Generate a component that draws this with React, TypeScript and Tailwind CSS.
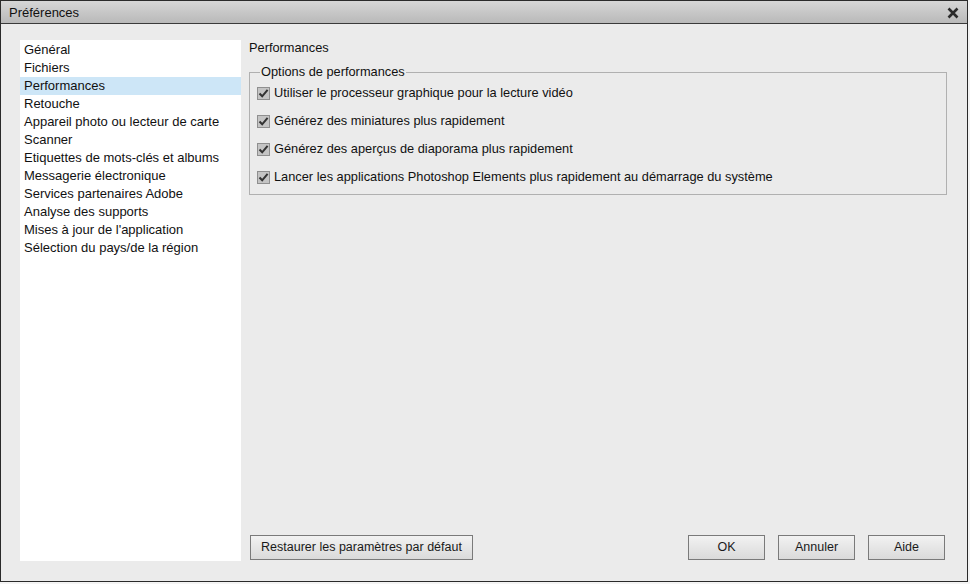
import React from 'react'

const categories = [
  'Général',
  'Fichiers',
  'Performances',
  'Retouche',
  'Appareil photo ou lecteur de carte',
  'Scanner',
  'Etiquettes de mots-clés et albums',
  'Messagerie électronique',
  'Services partenaires Adobe',
  'Analyse des supports',
  "Mises à jour de l'application",
  'Sélection du pays/de la région',
]

const options = [
  'Utiliser le processeur graphique pour la lecture vidéo',
  'Générez des miniatures plus rapidement',
  'Générez des aperçus de diaporama plus rapidement',
  'Lancer les applications Photoshop Elements plus rapidement au démarrage du système',
]

function Checkbox() {
  return (
    <span className="flex h-[13px] w-[13px] items-center justify-center border border-[#8f8f8f] bg-[#c4c4c4]">
      <svg width="11" height="11" viewBox="0 0 11 11">
        <path d="M1.5 5.5 L4.2 8.3 L9.6 1.8" fill="none" stroke="#333" strokeWidth="2" />
      </svg>
    </span>
  )
}

function Btn({ label, className }: { label: string; className: string }) {
  return (
    <button className={`h-[25px] border border-[#7a7a7a] bg-gradient-to-b from-[#f2f2f2] to-[#dadada] text-[12.5px] text-[#1a1a1a] ${className}`}>
      {label}
    </button>
  )
}

export default function App() {
  return (
    <div className="h-[584px] w-[970px] bg-[#f4f4f4] font-['Liberation_Sans',sans-serif]">
      <div className="flex h-[582px] w-[968px] flex-col border border-[#2a2a2a] bg-[#ebebeb]">
        <div className="flex h-[23px] items-center justify-between border-b border-[#3a3a3a] bg-gradient-to-b from-[#d6d6d6] to-[#b9b9b9] pl-[8px] pr-[8px] pt-[2px]">
          <span className="text-[13px] text-[#111]">Préférences</span>
          <svg width="12" height="12" viewBox="0 0 12 12">
            <path d="M1.5 1.5 L10.5 10.5 M10.5 1.5 L1.5 10.5" stroke="#2b2b2b" strokeWidth="2.6" />
          </svg>
        </div>
        <div className="flex flex-1 gap-[8px] pb-[20px] pl-[19px] pr-[20px] pt-[16px]">
          <ul className="w-[221px] bg-white pt-[1px] text-[13px] text-[#111]">
            {categories.map((c) => (
              <li
                key={c}
                className={`flex h-[18px] items-center pl-[4px] ${c === 'Performances' ? 'bg-[#cde6f7]' : ''}`}
              >
                {c}
              </li>
            ))}
          </ul>
          <div className="flex flex-1 flex-col text-[12.8px] text-[#111]">
            <div className="leading-[15px]">Performances</div>
            <fieldset className="mt-[10px] border border-[#b0b0b0] pb-[3px] pl-[7px]">
              <legend className="ml-[3px] px-[1px] leading-[14px]">Options de performances</legend>
              <div className="flex flex-col">
                {options.map((o) => (
                  <div key={o} className="flex h-[28px] items-center gap-[4px]">
                    <Checkbox />
                    <span>{o}</span>
                  </div>
                ))}
              </div>
            </fieldset>
            <div className="mb-[1px] ml-[1px] mr-[2px] mt-auto flex items-center">
              <Btn label="Restaurer les paramètres par défaut" className="w-[223px]" />
              <Btn label="OK" className="ml-auto w-[77px]" />
              <Btn label="Annuler" className="ml-[13px] w-[77px]" />
              <Btn label="Aide" className="ml-[13px] w-[77px]" />
            </div>
          </div>
        </div>
      </div>
    </div>
  )
}
